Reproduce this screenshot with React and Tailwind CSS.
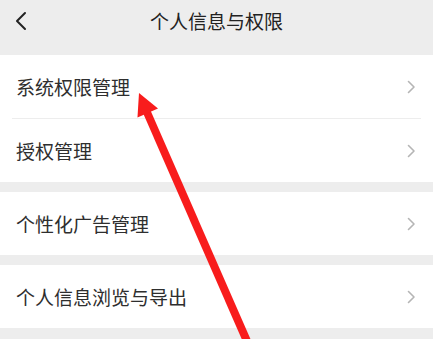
const font = { fontFamily: '"Noto Sans CJK SC", "Noto Sans", sans-serif' };

function Chevron() {
  return (
    <svg width="9" height="14" viewBox="0 0 9 14" className="shrink-0">
      <polyline points="1.5,1.5 7,7 1.5,12.5" fill="none" stroke="#b5b5b5" strokeWidth="1.6" strokeLinecap="round" strokeLinejoin="round" />
    </svg>
  );
}

function Row({ label, divider }) {
  return (
    <div className="bg-white">
      <div className="flex h-[63px] items-center justify-between pl-4 pr-[17px]">
        <span className="text-[19px] leading-none text-[#2e2e2e]">{label}</span>
        <Chevron />
      </div>
      {divider && <div className="mx-3 h-px bg-[#ededed]" />}
    </div>
  );
}

export default function App() {
  return (
    <div className="relative min-h-screen overflow-hidden bg-[#ededed]" style={font}>
      <div className="relative flex h-[55px] items-center justify-center pb-[15px]">
        <svg width="14" height="20" viewBox="0 0 14 20" className="absolute left-[14px] top-[11px]">
          <polyline points="11,2 3,10 11,18" fill="none" stroke="#222" strokeWidth="2" strokeLinecap="round" strokeLinejoin="round" />
        </svg>
        <span className="text-[19px] leading-none text-[#222]">个人信息与权限</span>
      </div>

      <div className="flex flex-col">
        <Row label="系统权限管理" divider />
        <Row label="授权管理" />
        <div className="h-[10px]" />
        <Row label="个性化广告管理" />
        <div className="h-[10px]" />
        <Row label="个人信息浏览与导出" />
      </div>

      <svg className="pointer-events-none absolute left-0 top-0" width="433" height="339" viewBox="0 0 433 339">
        <line x1="250" y1="348" x2="146" y2="110" stroke="#f81c1c" strokeWidth="8" />
        <polygon points="139,93 158,108.5 137.5,117.5" fill="#f81c1c" />
      </svg>
    </div>
  );
}
